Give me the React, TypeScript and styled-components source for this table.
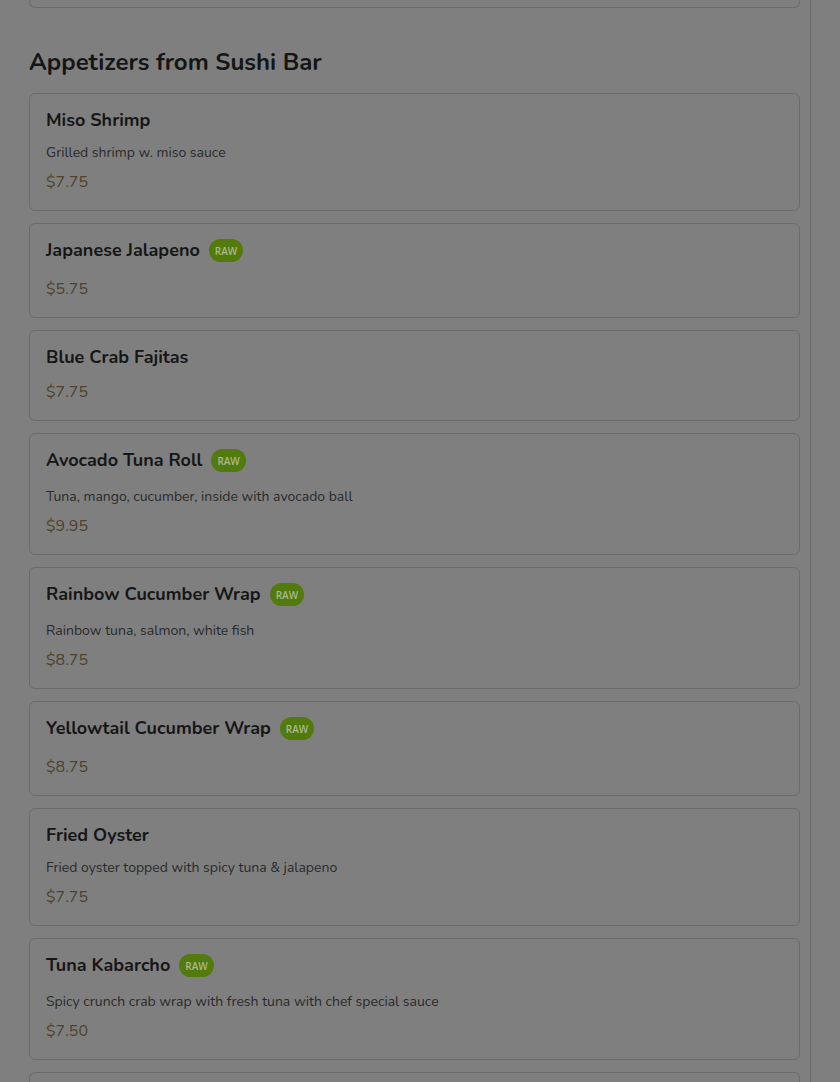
import React from 'react';
import styled, { createGlobalStyle } from 'styled-components';

const GlobalStyle = createGlobalStyle`
  html, body {
    margin: 0;
    padding: 0;
    background: #7f7f7f;
    font-family: "Nunito", "Lato", "Noto Sans", sans-serif;
  }
`;

const Page = styled.div`
  display: flex;
  height: 100vh;
  overflow: hidden;
`;

const Main = styled.main`
  width: 811px;
  box-sizing: border-box;
  padding: 0 10px 0 29px;
  border-right: 1px solid #6a6a6a;
`;

// edges of the cards cut by the scroll position
const CardEdge = styled.div<{ $side: 'top' | 'bottom' }>`
  height: ${p => (p.$side === 'bottom' ? '7px' : '20px')};
  border: 1px solid #6b6b6b;
  ${p => (p.$side === 'bottom' ? 'border-top: none;' : 'border-bottom: none;')}
  border-radius: ${p => (p.$side === 'bottom' ? '0 0 6px 6px' : '6px 6px 0 0')};
`;

const SectionTitle = styled.h2`
  margin: 38px 0 15px;
  font-size: 24px;
  line-height: 32px;
  font-weight: 700;
  color: #151515;
`;

const List = styled.div`
  display: flex;
  flex-direction: column;
  gap: 12px;
`;

const Card = styled.div`
  border: 1px solid #6b6b6b;
  border-radius: 6px;
  padding: 15px 16px 16px;
`;

const TitleRow = styled.div<{ $raw?: boolean }>`
  display: flex;
  align-items: flex-start;
  gap: 9px;
  min-height: ${p => (p.$raw ? '26px' : '22px')};
  margin-bottom: 12px;
`;

const ItemName = styled.div`
  font-size: 18px;
  line-height: 22px;
  font-weight: 700;
  color: #161616;
`;

const RawBadge = styled.span`
  display: inline-flex;
  align-items: center;
  justify-content: center;
  height: 23px;
  padding: 0 6px;
  border-radius: 12px;
  background: #527a0c;
  color: #a9b98f;
  font-family: "Open Sans", "Noto Sans", sans-serif;
  font-size: 10px;
  font-weight: 600;
`;

const Description = styled.div`
  font-size: 14px;
  line-height: 20px;
  color: #2a2a2a;
  margin-bottom: 7px;
`;

const Price = styled.div`
  font-size: 16px;
  line-height: 24px;
  color: #4e4329;
`;

interface MenuItem {
  name: string;
  price: string;
  description?: string;
  raw?: boolean;
}

const items: MenuItem[] = [
  { name: 'Miso Shrimp', description: 'Grilled shrimp w. miso sauce', price: '$7.75' },
  { name: 'Japanese Jalapeno', raw: true, price: '$5.75' },
  { name: 'Blue Crab Fajitas', price: '$7.75' },
  { name: 'Avocado Tuna Roll', raw: true, description: 'Tuna, mango, cucumber, inside with avocado ball', price: '$9.95' },
  { name: 'Rainbow Cucumber Wrap', raw: true, description: 'Rainbow tuna, salmon, white fish', price: '$8.75' },
  { name: 'Yellowtail Cucumber Wrap', raw: true, price: '$8.75' },
  { name: 'Fried Oyster', description: 'Fried oyster topped with spicy tuna & jalapeno', price: '$7.75' },
  { name: 'Tuna Kabarcho', raw: true, description: 'Spicy crunch crab wrap with fresh tuna with chef special sauce', price: '$7.50' },
];

const MenuCard: React.FC<{ item: MenuItem }> = ({ item }) => (
  <Card>
    <TitleRow $raw={item.raw}>
      <ItemName>{item.name}</ItemName>
      {item.raw && <RawBadge>RAW</RawBadge>}
    </TitleRow>
    {item.description && <Description>{item.description}</Description>}
    <Price>{item.price}</Price>
  </Card>
);

export default function App() {
  return (
    <>
      <GlobalStyle />
      <Page>
        <Main>
          <CardEdge $side="bottom" />
          <SectionTitle>Appetizers from Sushi Bar</SectionTitle>
          <List>
            {items.map(item => (
              <MenuCard key={item.name} item={item} />
            ))}
            <CardEdge $side="top" />
          </List>
        </Main>
      </Page>
    </>
  );
}
